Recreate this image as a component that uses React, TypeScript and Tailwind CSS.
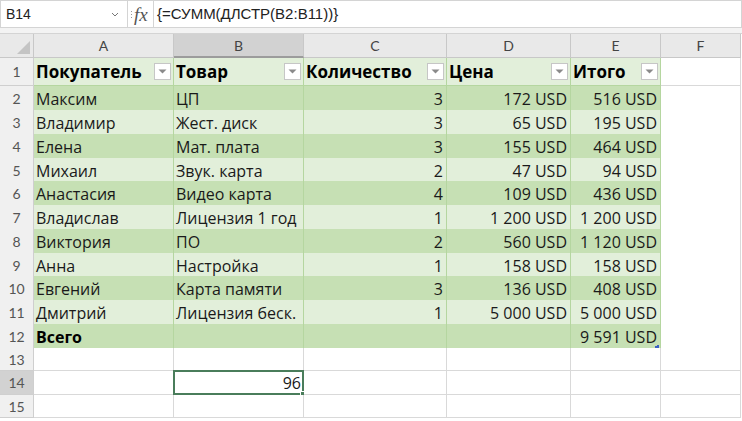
import React from "react";

const GRID = "grid grid-cols-[34px_140px_130px_143px_124px_90px_80px]";
const HEAD_FONT = "font-['Lato','Noto_Sans',sans-serif]";
const CELL_FONT = "font-['Open_Sans','Noto_Sans',sans-serif]";

const rows = [
  ["Максим", "ЦП", "3", "172 USD", "516 USD"],
  ["Владимир", "Жест. диск", "3", "65 USD", "195 USD"],
  ["Елена", "Мат. плата", "3", "155 USD", "464 USD"],
  ["Михаил", "Звук. карта", "2", "47 USD", "94 USD"],
  ["Анастасия", "Видео карта", "4", "109 USD", "436 USD"],
  ["Владислав", "Лицензия 1 год", "1", "1 200 USD", "1 200 USD"],
  ["Виктория", "ПО", "2", "560 USD", "1 120 USD"],
  ["Анна", "Настройка", "1", "158 USD", "158 USD"],
  ["Евгений", "Карта памяти", "3", "136 USD", "408 USD"],
  ["Дмитрий", "Лицензия беск.", "1", "5 000 USD", "5 000 USD"],
];

// rows 2..12 are 23 or 24px tall, like Excel's 15pt rows at this zoom
const rowH = (i: number) => (i % 4 === 3 ? "h-[23px]" : "h-[24px]");

function FilterButton() {
  return (
    <span className="absolute right-[2px] top-[5px] flex h-[17px] w-[17px] items-center justify-center border border-[#c6c6c6] bg-white">
      <svg width="9" height="5" viewBox="0 0 9 5">
        <path d="M0.5 0.5h8L4.5 4.5z" fill="#8a8a8a" />
      </svg>
    </span>
  );
}

function RowHead({ n, active }: { n: number; active?: boolean }) {
  return (
    <div
      className={`flex items-center justify-center border-b border-r border-[#cfcfcf] text-[14px] text-[#555] ${HEAD_FONT} ${
        active ? "bg-[#d2d2d2]" : "bg-[#f0f0f0]"
      }`}
    >
      {n}
    </div>
  );
}

function EmptyRow({ n, h, selected }: { n: number; h: string; selected?: boolean }) {
  return (
    <div className={`${GRID} ${h}`}>
      <RowHead n={n} active={selected} />
      {[0, 1, 2, 3, 4, 5].map((i) => (
        <div key={i} className="relative border-b border-r border-[#d9d9d9] bg-white">
          {selected && i === 1 && (
            <div className={`absolute -left-[1px] -top-[1px] bottom-[-1px] right-[-1px] flex items-center justify-end border-2 border-[#4a7d5b] pr-[1px] pt-[1px] text-[16px] text-[#1a1a1a] ${CELL_FONT}`}>
              96
              <span className="absolute -bottom-[4px] -right-[4px] h-[6px] w-[6px] border border-white bg-[#4a7d5b]" />
            </div>
          )}
        </div>
      ))}
    </div>
  );
}

export default function App() {
  const colHeads = ["A", "B", "C", "D", "E", "F"];
  const headers = ["Покупатель", "Товар", "Количество", "Цена", "Итого"];

  return (
    <div className="h-[421px] w-[742px] overflow-hidden bg-white">
      {/* formula bar */}
      <div className="flex h-[28px] border border-[#d4d4d4] bg-white font-['Liberation_Sans',Arial,sans-serif] text-[15px] text-[#222]">
        <div className="flex w-[127px] items-center justify-between border-r border-[#d4d4d4] pl-[5px] pr-[8px]">
          <span className="text-[14px]">B14</span>
          <svg width="8" height="5" viewBox="0 0 8 5">
            <path d="M1 1l3 3 3-3" stroke="#777" strokeWidth="1" fill="none" />
          </svg>
        </div>
        <div className="flex w-[26px] items-center border-r border-[#d4d4d4]">
          <span className="ml-[3px] flex flex-col gap-[2px]">
            <span className="h-[1px] w-[1px] bg-[#999]" />
            <span className="h-[1px] w-[1px] bg-[#999]" />
            <span className="h-[1px] w-[1px] bg-[#999]" />
          </span>
          <span className="ml-[2px] font-['Liberation_Serif',serif] text-[19px] italic leading-none text-[#555]">fx</span>
        </div>
        <div className="flex flex-1 items-center pl-[3px]">{"{=СУММ(ДЛСТР(B2:B11))}"}</div>
      </div>
      <div className="h-[6px] border-b border-[#d4d4d4] bg-[#f3f3f3]" />

      {/* column headings */}
      <div className={`${GRID} h-[24px] ${HEAD_FONT} text-[14px] text-[#444]`}>
        <div className="relative border-b border-r border-[#c8c8c8] bg-[#e9e9e9]">
          <svg className="absolute bottom-[3px] right-[3px]" width="13" height="13" viewBox="0 0 13 13">
            <path d="M13 0V13H0z" fill="#c4c4c4" />
          </svg>
        </div>
        {colHeads.map((c) => (
          <div
            key={c}
            className={`flex items-center justify-center border-r border-[#c8c8c8] ${
              c === "B" ? "border-b-2 border-b-[#9c9c9c] bg-[#d2d2d2]" : "border-b border-b-[#c8c8c8] bg-[#e9e9e9]"
            }`}
          >
            {c}
          </div>
        ))}
      </div>

      {/* table header row */}
      <div className={`${GRID} h-[28px]`}>
        <RowHead n={1} />
        {headers.map((h) => (
          <div
            key={h}
            className={`relative flex items-center border-b border-r border-[#b5d6a0] bg-[#e2efda] pl-[2px] pt-[1px] text-[17px] font-bold text-black ${CELL_FONT}`}
          >
            {h}
            <FilterButton />
          </div>
        ))}
        <div className="border-b border-r border-[#d9d9d9] bg-white" />
      </div>

      {/* data rows */}
      {rows.map((r, i) => {
        const bg = i % 2 === 0 ? "bg-[#c6e0b4]" : "bg-[#e2efda]";
        return (
          <div key={i} className={`${GRID} ${rowH(i)}`}>
            <RowHead n={i + 2} />
            {r.map((v, j) => (
              <div
                key={j}
                className={`flex items-center border-b border-r border-[#b5d6a0] ${bg} pt-[1px] text-[16px] text-[#1a1a1a] ${CELL_FONT} ${
                  j >= 2 ? "justify-end pr-[3px]" : "pl-[2px]"
                }`}
              >
                {v}
              </div>
            ))}
            <div className="border-b border-r border-[#d9d9d9] bg-white" />
          </div>
        );
      })}

      {/* total row */}
      <div className={`${GRID} h-[24px]`}>
        <RowHead n={12} />
        <div className={`flex items-center border-b border-r border-[#b5d6a0] bg-[#c6e0b4] pl-[2px] pt-[1px] text-[16px] font-bold text-black ${CELL_FONT}`}>
          Всего
        </div>
        <div className="border-b border-r border-[#b5d6a0] bg-[#c6e0b4]" />
        <div className="border-b border-r border-[#b5d6a0] bg-[#c6e0b4]" />
        <div className="border-b border-r border-[#b5d6a0] bg-[#c6e0b4]" />
        <div className={`relative flex items-center justify-end border-b border-r border-[#b5d6a0] bg-[#c6e0b4] pr-[3px] pt-[1px] text-[16px] text-[#1a1a1a] ${CELL_FONT}`}>
          9 591 USD
          <span className="absolute bottom-[1px] right-[1px] h-[3px] w-[4px] border-b-2 border-r-2 border-[#3b5fc4]" />
        </div>
        <div className="border-b border-r border-[#d9d9d9] bg-white" />
      </div>

      <EmptyRow n={13} h="h-[23px]" />
      <EmptyRow n={14} h="h-[24px]" selected />
      <EmptyRow n={15} h="h-[23px]" />
    </div>
  );
}
